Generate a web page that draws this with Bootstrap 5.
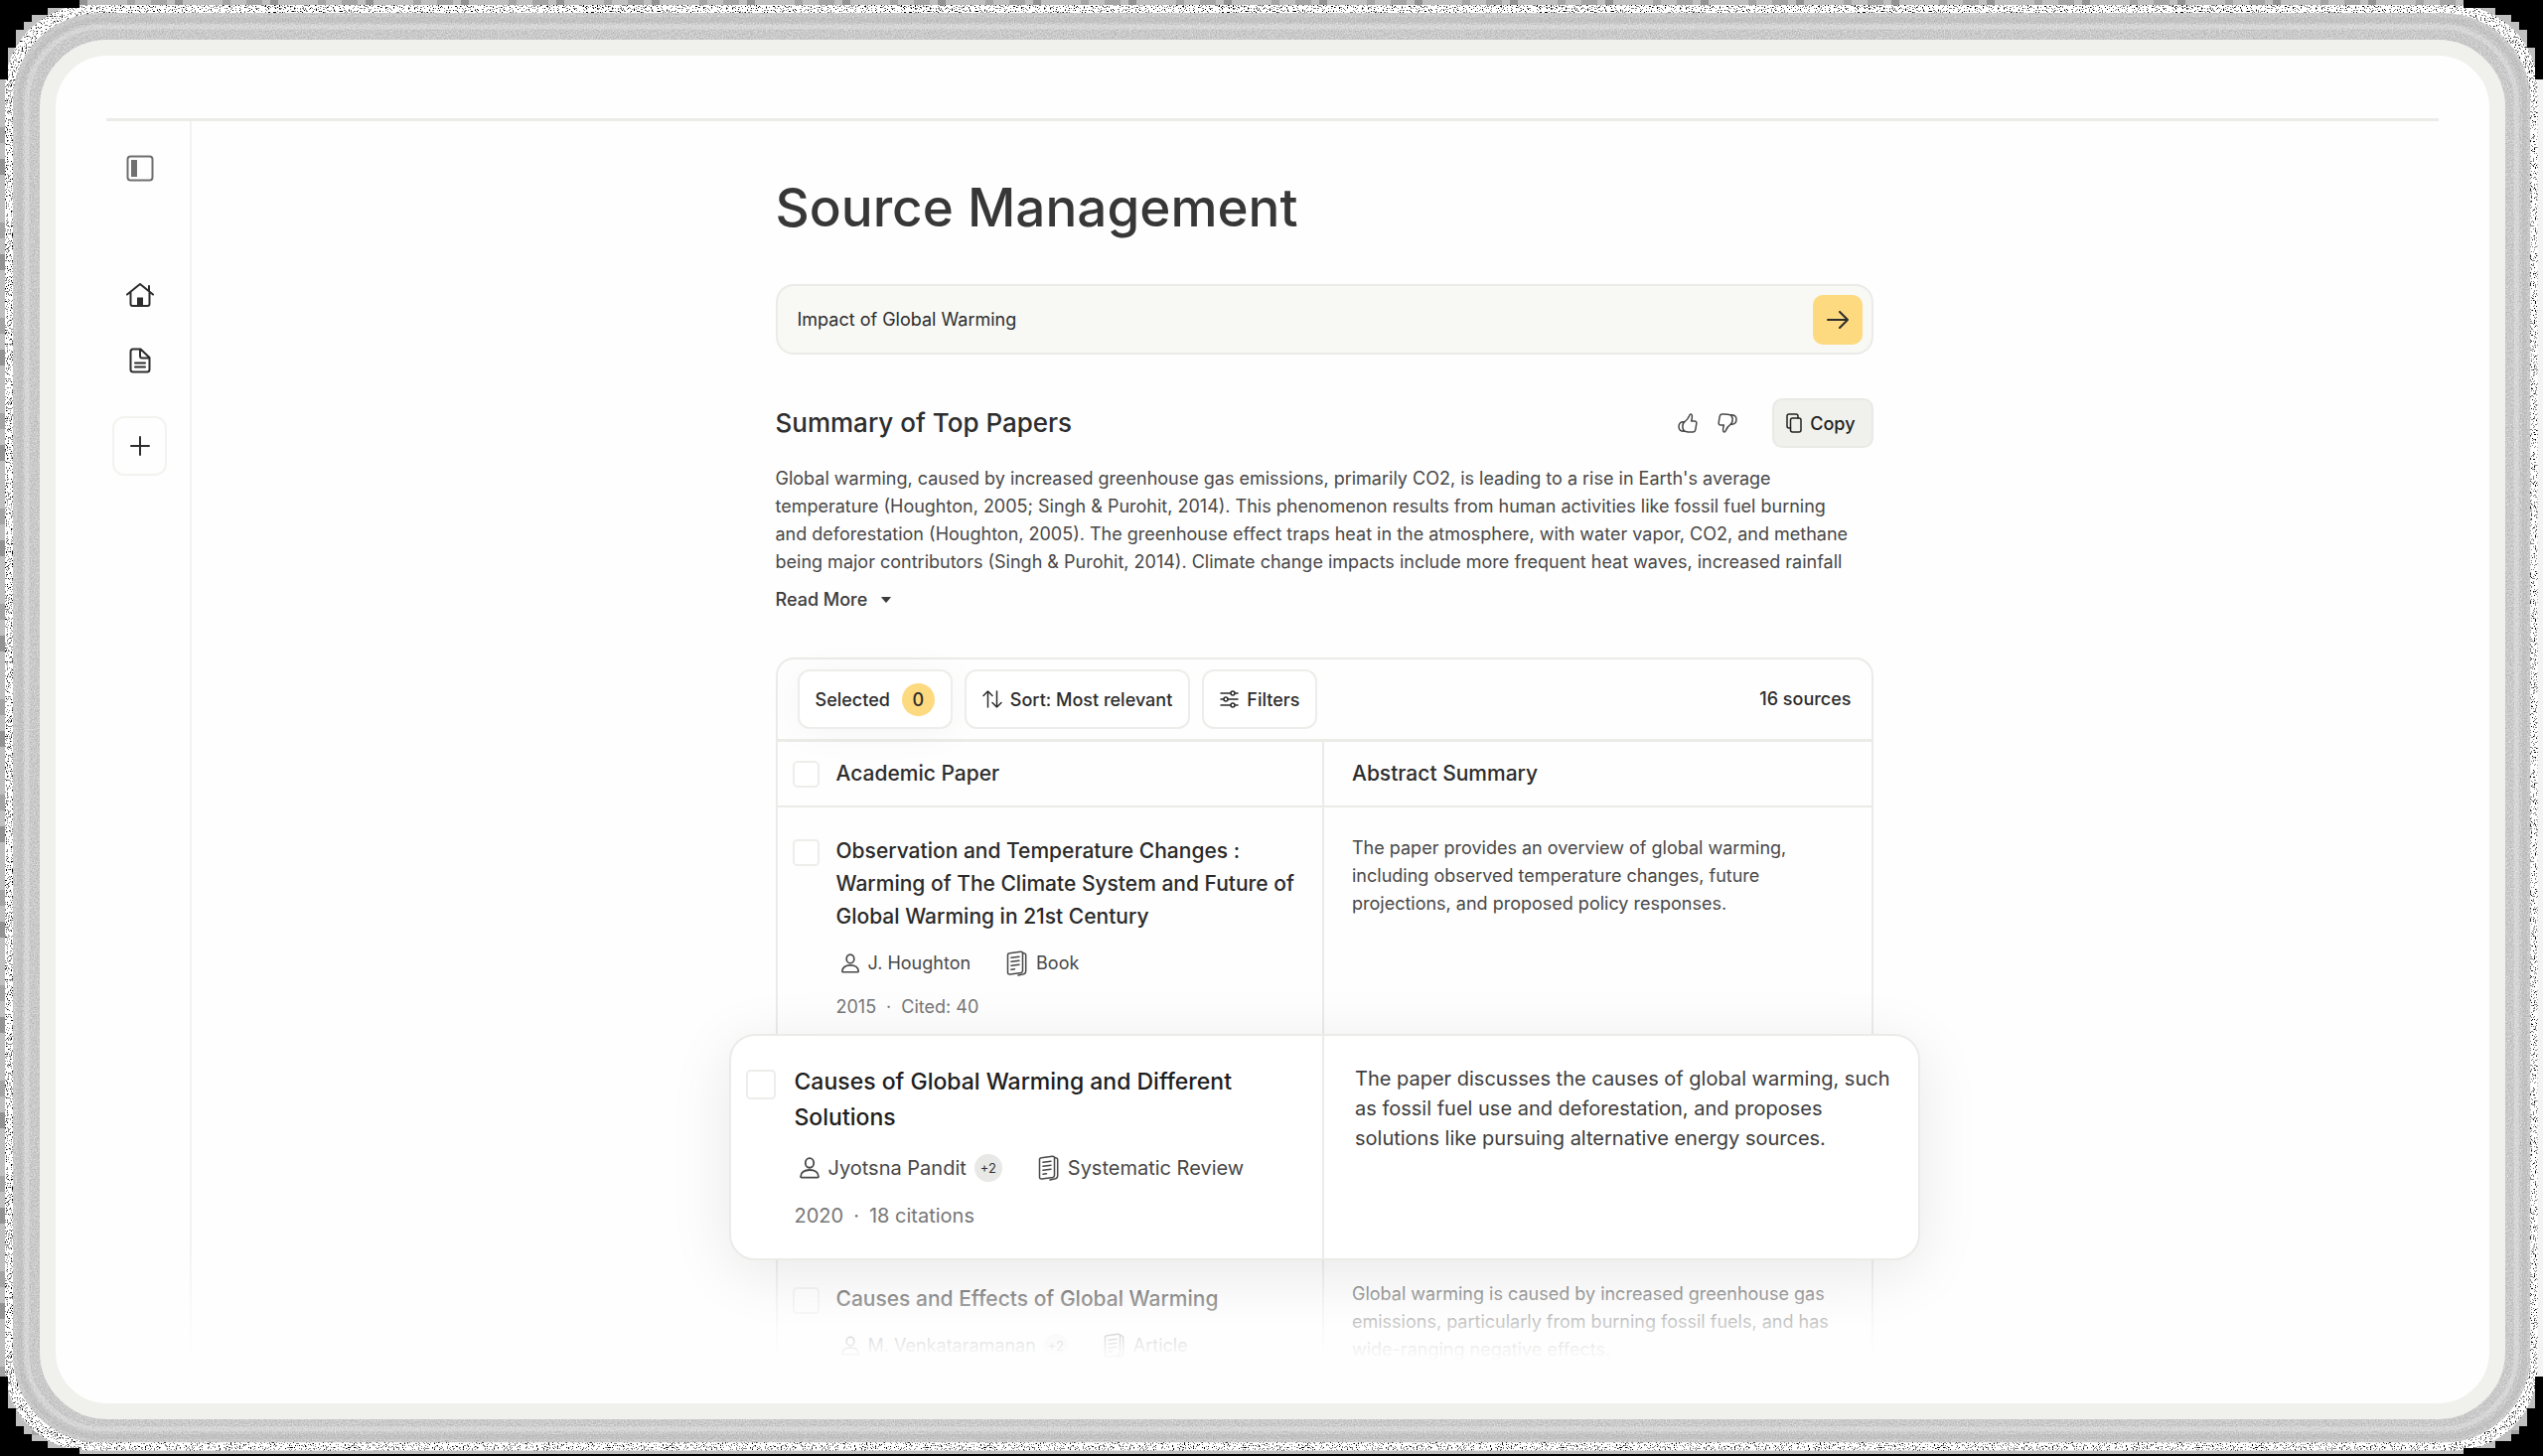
<!DOCTYPE html>
<html lang="en">
<head>
<meta charset="utf-8">
<meta name="viewport" content="width=device-width, initial-scale=1">
<title>Source Management</title>
<link href="https://cdn.jsdelivr.net/npm/bootstrap@5.3.0/dist/css/bootstrap.min.css" rel="stylesheet">
<style>
:root{--line:#ebebe8;--ink:#2d2d2d;--soft:#484848;--beige:#f0f1ec;--gold:#fdd97f}
body{font-family:Inter,"Liberation Sans",sans-serif;color:var(--ink);background:#e4e4e4;min-height:100vh;font-size:18px;line-height:28px}
.edge{position:fixed;inset:0;width:100%;height:100%;z-index:0}
.stage{position:relative;z-index:1;min-height:100vh;padding:40px 38px 38px 40px}
.screen{border:16px solid var(--beige);border-radius:68px;background:#fefefe;padding:63px 51px 40px 51px;overflow:hidden}
.shell{border-top:3px solid var(--line);position:relative;overflow:hidden}
.rail{width:86px;border-right:2px solid #f2f2ef;padding:34px 25px 0 6px}
.rail a,.rail button{color:var(--ink);display:flex;align-items:center;justify-content:center;padding:0;background:none;border:0;width:55px}
.rail .toggler{height:28px;color:#6f6f6f;margin-bottom:97px}
.rail a{height:32px;margin-bottom:34px}
.rail .adder{height:60px;border:2px solid #f3f3f0;border-radius:12px;margin-top:6px}
svg.ico{fill:none;stroke:currentColor;stroke-width:2;stroke-linecap:round;stroke-linejoin:round;flex:none;display:block}
svg.thin{stroke-width:1.5}
.work{padding-left:18px}
.column{width:1105px;max-width:100%}
.spaced{margin-top:44px}
.title{font-size:53px;line-height:64px;font-weight:500;color:#373737;margin:55px 0 45px}
.ask{height:71px;border:2px solid var(--line);border-radius:18px;background:#f8f9f5;padding:0 9px 0 20px}
.ask input{background:none;border:0;box-shadow:none;padding:0;font-size:18px;color:var(--ink)}
.ask input:focus{background:none;box-shadow:none}
.go{width:50px;height:50px;border-radius:10px;background:var(--gold);color:var(--ink);padding:0}
.subhead{font-size:26px;line-height:32px;font-weight:500;margin:0}
.votes{gap:20px;margin-right:35px}
.ghost{background:none;border:0;padding:0;color:#484848}
.copy{height:50px;border:2px solid #e9e9e6;border-radius:10px;background:var(--beige);padding:0 16px 0 12px;font-size:18px;font-weight:500;color:#222}
.body-copy{color:var(--soft);font-size:18px;line-height:28px}
.summary{margin:17px 0 10px}
.readmore{font-weight:500;font-size:18px;color:#3c3c3c;text-decoration:none;line-height:28px;gap:13px}
.panel{border:2px solid var(--line);border-bottom:0;border-radius:18px 18px 0 0}
.tools{gap:12px;padding:10px 20px;border-bottom:3px solid var(--line);font-weight:500}
.tool{height:60px;border:2px solid #ededea;border-radius:12px;background:#fff;padding:0 16px;font-size:18px;font-weight:500;color:var(--ink)}
.tool.lifted{box-shadow:0 4px 40px rgba(0,0,0,.04);gap:12px}
.count{width:33px;height:33px;border-radius:50%;background:var(--gold);display:flex;align-items:center;justify-content:center}
.sources,.sources thead,.sources tbody{display:block}
.sources tr{display:grid;grid-template-columns:1fr 1fr}
.sources th,.sources td{padding:0;text-align:left;font-weight:400}
.sources th:first-child,.sources td:first-child{border-right:2px solid var(--line)}
.cell{display:flex;gap:17px;padding-left:15px}
.sources .abs{padding-left:28px}
.headrow{border-bottom:2px solid var(--line);height:66px}
.sources .headrow th{display:flex;align-items:center;font-size:21px;font-weight:500}
.tick{width:27px;height:27px;margin:0;border:2px solid #ededea;border-radius:6px;flex:none;background-color:#fff}
.paper{font-size:21px;line-height:33px;font-weight:500;margin:0;color:#2a2a2a}
.meta{font-size:18px;line-height:28px;color:var(--soft);margin-top:17px}
.when{font-size:18px;line-height:28px;color:#777;display:flex;gap:10px;margin-top:16px}
.kind{margin-left:36px}
.more{background:#e8e8e6;color:#333;border-radius:50%;width:24px;height:24px;font-size:13px;display:flex;align-items:center;justify-content:center}
.r1{height:228px}
.r1 .cell{padding-top:27px}.r1 .tick{margin-top:5px}
.sources .r1 .abs{padding-top:27px}
.r3{height:104px}
.r3 .cell{padding-top:22px}.r3 .tick{margin-top:5px}
.sources .r3 .abs{padding-top:20px}
.sources .hot{position:relative;z-index:2;margin:0 -49px;height:228px;border:2px solid var(--line);border-radius:26px;background:#fff;box-shadow:0 12px 64px rgba(0,0,0,.09)}
.hot .cell{padding-top:28px;gap:19px}
.hot .tick{width:30px;height:30px;margin-top:6px}
.hot .paper{font-size:23px;line-height:36px;color:#1d1d1d}
.hot .meta,.hot .when{font-size:20px}
.hot .meta{margin-top:19px}
.hot .when{margin-top:20px}
.hot .more{width:28px;height:28px}
.sources .hot .abs{font-size:20px;line-height:30px;padding-top:28px;padding-left:31px;color:#3d3d3d}
.veil{position:absolute;left:0;right:0;bottom:0;height:125px;background:linear-gradient(rgba(254,254,254,0),rgba(254,254,254,.94) 90%,#fefefe);z-index:1;pointer-events:none}
</style>
<script src="https://cdn.jsdelivr.net/npm/bootstrap@5.3.0/dist/js/bootstrap.bundle.min.js"></script>
</head>
<body>
<svg class="edge" aria-hidden="true">
<defs>
<filter id="speck" x="0" y="0" width="100%" height="100%"><feTurbulence type="fractalNoise" baseFrequency=".8" numOctaves="2" seed="4"/><feColorMatrix values="1 0 0 0 0 1 0 0 0 0 1 0 0 0 0 0 0 0 0 1"/><feComponentTransfer><feFuncR type="discrete" tableValues="0 0 0 .2 1 1 1 1 1 1"/><feFuncG type="discrete" tableValues="0 0 0 .2 1 1 1 1 1 1"/><feFuncB type="discrete" tableValues="0 0 0 .2 1 1 1 1 1 1"/></feComponentTransfer><feComposite in2="SourceGraphic" operator="in"/></filter>
<filter id="grain" x="0" y="0" width="100%" height="100%" color-interpolation-filters="sRGB"><feTurbulence type="fractalNoise" baseFrequency=".7" numOctaves="2" seed="9"/><feColorMatrix values=".3 0 0 0 .64 .3 0 0 0 .64 .3 0 0 0 .64 0 0 0 0 1"/><feComposite in2="SourceGraphic" operator="in"/></filter>
<pattern id="blocks" width="96" height="96" patternUnits="userSpaceOnUse"><path fill="#c0c0c0" d="M0 0h96v96H0z"/><path fill="#a4a4a4" d="M0 32h5v16H0zM32 0h8v5h-8zM56 0h16v5H56z"/><path fill="#929292" d="M0 64h5v16H0zM80 0h8v5h-8z"/></pattern>
<path id="nook" d="M0 0h80v8H48v7H32v7h-8v8h-8v18H8v32H0z"/>
</defs>
<rect width="100%" height="100%" fill="url(#blocks)"/>
<svg x="100%" overflow="visible"><rect x="-8" width="8" height="100%" fill="#f4f4f4"/></svg>
<svg x="5" y="5" width="99.6%" height="99.3%"><rect width="100%" height="100%" rx="84" fill="#fff" filter="url(#speck)"/></svg>
<svg x="13" y="13" width="99%" height="98.2%"><rect width="100%" height="100%" rx="88" fill="#fff" filter="url(#grain)"/></svg>
<svg x="20" y="20" width="98.5%" height="97.3%" overflow="visible" fill="none" stroke-width="5"><rect width="100%" height="100%" rx="82" stroke="#aaa" stroke-opacity=".25"/></svg>
<svg x="27" y="27" width="97.9%" height="96.3%" overflow="visible" fill="none" stroke-width="5"><rect width="100%" height="100%" rx="76" stroke="#eee" stroke-opacity=".35"/></svg>
<svg y="100%" overflow="visible"><rect y="-2" width="100%" height="2"/></svg>
<use href="#nook"/>
<svg x="100%" overflow="visible"><use href="#nook" transform="scale(-1 1)"/></svg>
<svg y="100%" overflow="visible"><use href="#nook" transform="scale(1 -1)"/></svg>
<svg x="100%" y="100%" overflow="visible"><use href="#nook" transform="scale(-1 -1)"/></svg>
</svg>
<svg width="0" height="0" class="position-absolute" aria-hidden="true">
<symbol id="person" viewBox="0 0 24 24"><ellipse cx="12" cy="6.500" rx="4.600" ry="5.200"/><path d="M2.200 21.500c0-4.500 4-7.300 9.800-7.300s9.800 2.800 9.800 7.300c0 .7-.4 1-1.200 1H3.400c-.8 0-1.200-.3-1.200-1z"/></symbol>
<symbol id="pages" viewBox="0 0 22 26"><path d="M3.500 2.800 14.500 1.200c1.300-.1 2 .5 2 1.700v17.600c0 1.200-.6 1.800-1.800 2L4 24c-1.700.2-2.500-.4-2.500-1.800V4.600C1.500 3.500 2.200 2.900 3.500 2.800zM17 2.500l1.800.6c.6.300.9.800.9 1.500v16.200c0 1.700-.7 2.600-2.200 3L12 25M5 7.300l8-1.100M5 11.300l8-1.100M5 15.300l8-1.100M5 19.300l3.500-.5"/></symbol>
<symbol id="thumb" viewBox="0 0 20 20"><path d="M7.200 18.200c2.600.8 5.600 1 8.200.8 1.500-.1 2.200-.9 2.400-2.300l1-6.200c.2-1.600-.5-2.500-2-2.500h-3.200c.5-1.600.9-3.400.8-5 0-1.500-.7-2.200-1.500-2-.8.100-1 .700-1.400 1.800-.9 2.300-2.200 4.200-4.300 5.600C5 9.800 4.800 11.700 4.900 14c.1 2.300.9 3.700 2.300 4.200zM6 8.800c-3.200-.3-5 1.800-5 4.900 0 3.200 2.200 5 6.200 4.500"/></symbol>
</svg>
<div class="stage d-flex flex-column">
<main class="screen flex-grow-1 d-flex flex-column">
<div class="shell d-flex flex-grow-1">
<nav class="rail d-flex flex-column" aria-label="Main">
<button type="button" class="toggler" aria-label="Toggle sidebar"><svg class="ico" width="28" height="28" viewBox="0 0 28 28"><rect x="1.500" y="1.500" width="25" height="24" rx="3"/><path d="M5 5h6v17H5z" fill="currentColor" stroke="none"/></svg></button>
<a href="#" aria-label="Home"><svg class="ico" width="28" height="26" viewBox="0 0 28 26"><path d="M1 12.500 14 2l13 10.500M4.500 10v12q0 2 2 2h15q2 0 2-2V10M23 9V4"/><path d="M11 15.500h6V24h-6z" fill="currentColor" stroke="none"/></svg></a>
<a href="#" aria-label="Documents"><svg class="ico" width="22" height="26" viewBox="0 0 22 26"><path d="M4 1.500h7.500l9 8.500V22q0 2.500-2.500 2.500H4Q1.500 24.500 1.500 22V4Q1.500 1.500 4 1.500zM11 1.500V8.500q0 2 2 2h7M6 15.500h10M6 19.500h10"/></svg></a>
<button type="button" class="adder" aria-label="Add"><svg class="ico" width="22" height="22" viewBox="0 0 22 22"><path d="M11 2v18M2 11h18"/></svg></button>
</nav>
<div class="work flex-grow-1 d-flex justify-content-center">
<div class="column">
<h1 class="title">Source Management</h1>
<form class="ask d-flex align-items-center">
<input class="form-control" type="text" value="Impact of Global Warming" aria-label="Search topic">
<button type="button" class="btn go d-flex align-items-center justify-content-center flex-shrink-0" aria-label="Search"><svg class="ico" width="22" height="18" viewBox="0 0 22 18"><path d="M1 9h20M13 1l8 8-8 8"/></svg></button>
</form>
<div class="d-flex align-items-center spaced">
<h2 class="subhead me-auto">Summary of Top Papers</h2>
<div class="votes d-flex">
<button type="button" class="ghost" aria-label="Like"><svg class="ico thin" width="20" height="20"><use href="#thumb"/></svg></button>
<button type="button" class="ghost" aria-label="Dislike"><svg class="ico thin" width="20" height="20" viewBox="0 0 20 20"><use href="#thumb" transform="rotate(180 10 10)"/></svg></button>
</div>
<button type="button" class="btn copy d-flex align-items-center gap-2"><svg class="ico thin" width="16" height="20" viewBox="0 0 16 20"><rect x="4.500" y="5" width="10.500" height="14" rx="2"/><path d="M4.500 15H3q-2 0-2-2V3q0-2 2-2h7q2 0 2 2v2"/></svg>Copy</button>
</div>
<p class="body-copy summary">Global warming, caused by increased greenhouse gas emissions, primarily CO2, is leading to a rise in Earth's average<br>temperature (Houghton, 2005; Singh &amp; Purohit, 2014). This phenomenon results from human activities like fossil fuel burning<br>and deforestation (Houghton, 2005). The greenhouse effect traps heat in the atmosphere, with water vapor, CO2, and methane<br>being major contributors (Singh &amp; Purohit, 2014). Climate change impacts include more frequent heat waves, increased rainfall</p>
<a href="#" class="readmore d-flex align-items-center">Read More <svg width="12" height="8" viewBox="0 0 12 8"><path fill="currentColor" d="M1.500 1h9q.5 0 .2.500L6.500 6.500q-.5.500-1 0L1.300 1.500q-.3-.5.200-.5z"/></svg></a>
<section class="panel spaced">
<div class="tools d-flex align-items-center">
<button type="button" class="btn tool lifted d-flex align-items-center">Selected <span class="count">0</span></button>
<button type="button" class="btn tool d-flex align-items-center gap-2"><svg class="ico thin" width="20" height="18" viewBox="0 0 20 18"><path d="M5.500 17V1M1 5.500 5.500 1 10 5.500M14.500 1v16M10 12.500l4.500 4.500 4.500-4.500"/></svg>Sort: Most relevant</button>
<button type="button" class="btn tool d-flex align-items-center gap-2"><svg class="ico thin" width="19" height="18" viewBox="0 0 19 18"><path d="M1 3h10M15 3h3M1 9h3M8 9h10M1 15h10M15 15h3"/><circle cx="13" cy="3" r="2"/><circle cx="6" cy="9" r="2"/><circle cx="13" cy="15" r="2"/></svg>Filters</button>
<span class="ms-auto">16 sources</span>
</div>
<table class="sources w-100">
<thead><tr class="headrow"><th scope="col"><div class="cell align-items-center"><input type="checkbox" class="form-check-input tick" aria-label="Select all">Academic Paper</div></th><th scope="col" class="abs">Abstract Summary</th></tr></thead>
<tbody>
<tr class="r1"><td><div class="cell"><input type="checkbox" class="form-check-input tick" aria-label="Select paper 1"><div>
<h3 class="paper">Observation and Temperature Changes :<br>Warming of The Climate System and Future of<br>Global Warming in 21st Century</h3>
<div class="meta d-flex align-items-center"><svg class="ico ms-1" width="20" height="24"><use href="#person"/></svg><span class="ms-2">J. Houghton</span><svg class="ico thin kind" width="22" height="26"><use href="#pages"/></svg><span class="ms-2">Book</span></div>
<div class="when"><span>2015</span><span>·</span><span>Cited: 40</span></div>
</div></div></td><td class="abs body-copy">The paper provides an overview of global warming,<br>including observed temperature changes, future<br>projections, and proposed policy responses.</td></tr>
<tr class="hot"><td><div class="cell"><input type="checkbox" class="form-check-input tick" aria-label="Select paper 2"><div>
<h3 class="paper">Causes of Global Warming and Different<br>Solutions</h3>
<div class="meta d-flex align-items-center"><svg class="ico ms-1" width="22" height="24"><use href="#person"/></svg><span class="ms-2">Jyotsna Pandit</span><span class="more ms-2">+2</span><svg class="ico thin kind" width="22" height="26"><use href="#pages"/></svg><span class="ms-2">Systematic Review</span></div>
<div class="when"><span>2020</span><span>·</span><span>18 citations</span></div>
</div></div></td><td class="abs">The paper discusses the causes of global warming, such<br>as fossil fuel use and deforestation, and proposes<br>solutions like pursuing alternative energy sources.</td></tr>
<tr class="r3"><td><div class="cell"><input type="checkbox" class="form-check-input tick" aria-label="Select paper 3"><div>
<h3 class="paper">Causes and Effects of Global Warming</h3>
<div class="meta d-flex align-items-center"><svg class="ico ms-1" width="20" height="24"><use href="#person"/></svg><span class="ms-2">M. Venkataramanan</span><span class="more ms-2">+2</span><svg class="ico thin kind" width="22" height="26"><use href="#pages"/></svg><span class="ms-2">Article</span></div>
</div></div></td><td class="abs body-copy">Global warming is caused by increased greenhouse gas<br>emissions, particularly from burning fossil fuels, and has<br>wide-ranging negative effects.</td></tr>
</tbody></table>
</section>
</div></div>
<div class="veil"></div>
</div>
</main>
</div>
</body>
</html>
